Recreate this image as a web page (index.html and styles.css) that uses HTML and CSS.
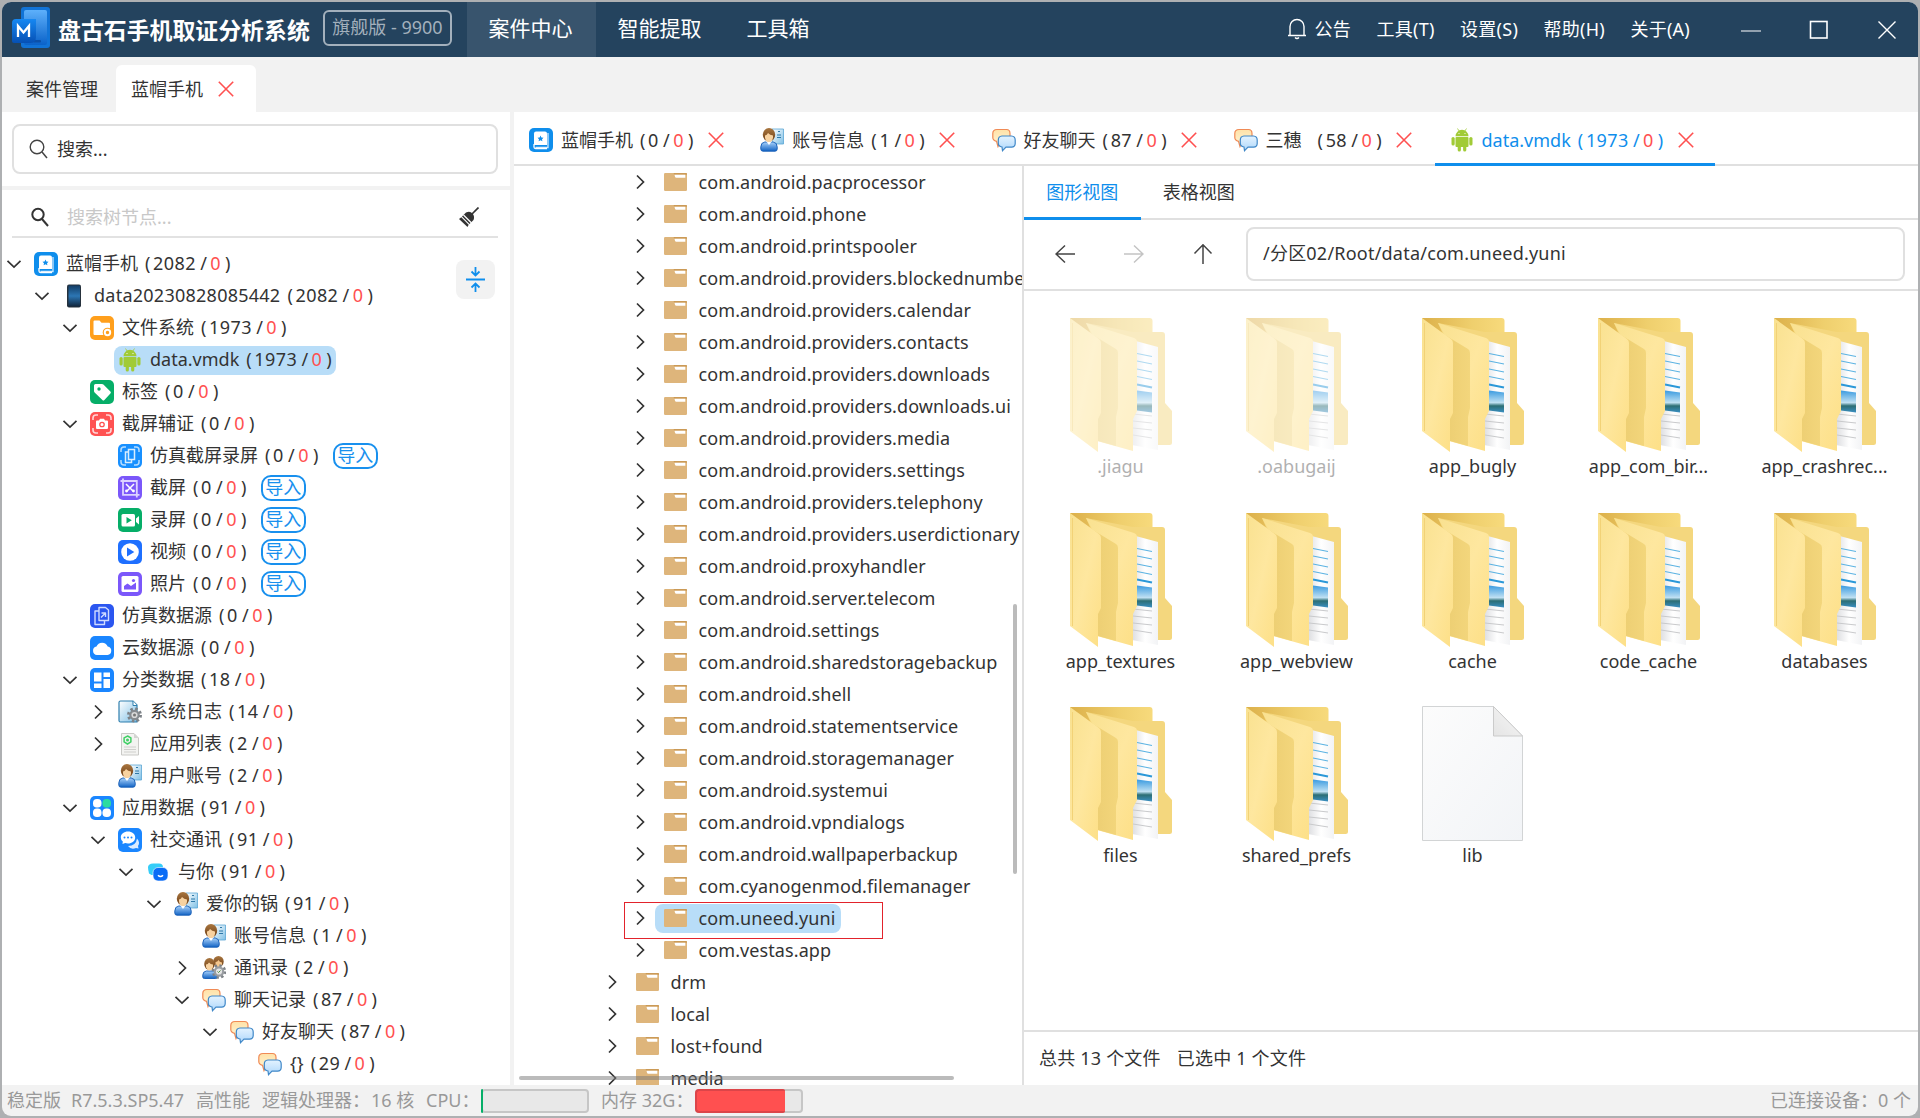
FILE: index.html
```html
<!DOCTYPE html>
<html lang="zh-CN">
<head>
<meta charset="utf-8">
<title>盘古石手机取证分析系统</title>
<link rel="stylesheet" href="styles.css">
</head>
<body>
<svg class="sprite" width="0" height="0" aria-hidden="true">
  <defs>
    <linearGradient id="gLogo" x1="0" y1="0" x2="0" y2="1"><stop offset="0" stop-color="#5db0fb"/><stop offset="1" stop-color="#0a62c9"/></linearGradient>
    <linearGradient id="gLogo2" x1="0" y1="0" x2="0" y2="1"><stop offset="0" stop-color="#1688f2"/><stop offset="1" stop-color="#0650b4"/></linearGradient>
    <linearGradient id="gPhone" x1="0" y1="0" x2="0" y2="1"><stop offset="0" stop-color="#123d66"/><stop offset=".5" stop-color="#2c76b4"/><stop offset="1" stop-color="#10263d"/></linearGradient>
    <linearGradient id="gFront" x1="0" y1="0" x2="1" y2="1"><stop offset="0" stop-color="#f9e190"/><stop offset=".5" stop-color="#fee79f"/><stop offset="1" stop-color="#fddf86"/></linearGradient>
    <linearGradient id="gBack" x1="0" y1="0" x2="1" y2="0"><stop offset="0" stop-color="#dcb04a"/><stop offset=".6" stop-color="#efcf6d"/><stop offset="1" stop-color="#f7da7c"/></linearGradient>
    <linearGradient id="gInner" x1="0" y1="0" x2="1" y2="0"><stop offset="0" stop-color="#ebcc70"/><stop offset="1" stop-color="#f3d67c"/></linearGradient>
    <linearGradient id="gPaper" x1="0" y1="0" x2="1" y2="0"><stop offset="0" stop-color="#dcdde0"/><stop offset=".5" stop-color="#fff"/><stop offset="1" stop-color="#f2f3f5"/></linearGradient>
    <linearGradient id="gSky" x1="0" y1="0" x2="0" y2="1"><stop offset="0" stop-color="#3b9be0"/><stop offset=".55" stop-color="#bfe0f2"/><stop offset=".7" stop-color="#2c6e74"/><stop offset="1" stop-color="#3a8fc2"/></linearGradient>
    <linearGradient id="gFile" x1="0" y1="0" x2="1" y2="1"><stop offset="0" stop-color="#fcfcfc"/><stop offset="1" stop-color="#f2f4f7"/></linearGradient>
    <linearGradient id="gFold" x1="0" y1="1" x2="1" y2="0"><stop offset="0" stop-color="#e4e4e4"/><stop offset="1" stop-color="#f8f8f8"/></linearGradient>
    <linearGradient id="gShirt" x1="0" y1="0" x2="0" y2="1"><stop offset="0" stop-color="#a9d2fb"/><stop offset="1" stop-color="#1263c4"/></linearGradient>
    <linearGradient id="gHair" x1="0" y1="0" x2="0" y2="1"><stop offset="0" stop-color="#a9763f"/><stop offset="1" stop-color="#6f3f16"/></linearGradient>
    <linearGradient id="gOrange" x1="0" y1="0" x2="0" y2="1"><stop offset="0" stop-color="#ffe2a8"/><stop offset="1" stop-color="#fff6d8"/></linearGradient>
    <linearGradient id="gBlue" x1="0" y1="0" x2="0" y2="1"><stop offset="0" stop-color="#e4f3ff"/><stop offset="1" stop-color="#aed7fb"/></linearGradient>
    <linearGradient id="gDoc" x1="0" y1="0" x2="1" y2="1"><stop offset="0" stop-color="#fff"/><stop offset="1" stop-color="#7fc0e6"/></linearGradient>
  </defs>
  <symbol id="open" viewBox="0 0 16 16"><path d="M1.5 4.8 8 11l6.500-6.200" fill="none" stroke="#333" stroke-width="1.7"/></symbol>
  <symbol id="shut" viewBox="0 0 16 16"><path d="M5 1.500 11.500 8 5 14.500" fill="none" stroke="#333" stroke-width="1.7"/></symbol>
  <symbol id="x" viewBox="0 0 16 16"><path d="M.8.800l14.400 14.400M15.200.800.8 15.200" fill="none" stroke="#ff5050" stroke-width="1.6"/></symbol>
  <symbol id="case" viewBox="0 0 24 24"><rect width="24" height="24" rx="5" fill="#0f8eec"/><path d="M7 3.500h9a2 2 0 0 1 2 2V17H5V5.500a2 2 0 0 1 2-2z" fill="#fff"/><path d="M19 5v14.500H6.500" fill="none" stroke="#cfe8fc" stroke-width="1.300"/><path d="M5 16v3q0 1.500 1.500 1.500H18" fill="none" stroke="#fff" stroke-width="1.300"/><path d="m11.500 7.500.9 1.900 2.100.3-1.500 1.500.4 2.100-1.900-1-1.900 1 .4-2.100-1.500-1.500 2.100-.3z" fill="#0f8eec"/></symbol>
  <symbol id="phone" viewBox="0 0 24 24"><rect x="5" y=".5" width="14" height="23" rx="2" fill="#26323d"/><rect x="6.500" y="1.500" width="11.500" height="21" fill="url(#gPhone)"/></symbol>
  <symbol id="fs" viewBox="0 0 24 24"><rect width="24" height="24" rx="5" fill="#ff9f1c"/><path d="M3.500 5.500q0-1 1-1h5l2 2.300h7.500q1 0 1 1V19H4.500q-1 0-1-1z" fill="#fff"/><circle cx="17.500" cy="16.500" r="4.800" fill="#ff9f1c"/><circle cx="17.500" cy="16.500" r="2.700" fill="none" stroke="#fff" stroke-width="2"/></symbol>
  <symbol id="android" viewBox="0 0 24 24"><g fill="#a1cb37"><path d="M5.500 8.300a6.500 6.500 0 0 1 13 0z"/><rect x="5.500" y="9" width="13" height="10" rx="1"/><rect x="1.500" y="9" width="3.200" height="8.500" rx="1.600"/><rect x="19.300" y="9" width="3.200" height="8.500" rx="1.600"/><rect x="7.700" y="17" width="3.200" height="6.500" rx="1.600"/><rect x="13.100" y="17" width="3.200" height="6.500" rx="1.600"/></g><path d="m7.500.5 1.700 2.700M16.500.5l-1.700 2.700" stroke="#a1cb37" stroke-width=".8"/><circle cx="9" cy="5.500" r=".6" fill="#fff"/><circle cx="15" cy="5.500" r=".6" fill="#fff"/></symbol>
  <symbol id="tag" viewBox="0 0 24 24"><rect width="24" height="24" rx="5" fill="#06ae68"/><path d="M4 5.500Q4 4 5.500 4H12q.8 0 1.400.6l7 7q1 1 0 2l-6 6.300q-1 1-2 0l-7.800-7.500Q4 11.800 4 11z" fill="#fff"/><circle cx="9" cy="9" r="1.700" fill="#06ae68"/></symbol>
  <symbol id="shot" viewBox="0 0 24 24"><rect width="24" height="24" rx="5" fill="#ff5252"/><path d="M3 8V6q0-3 3-3h2M16 3h2q3 0 3 3v2M21 16v2q0 3-3 3h-2M8 21H6q-3 0-3-3v-2" fill="none" stroke="#ffd5d5" stroke-width="1.600"/><path d="M6 9.500q0-1 1-1h2l1-1.700h4l1 1.700h2q1 0 1 1V16q0 1-1 1H7q-1 0-1-1z" fill="#fff"/><circle cx="12" cy="12.500" r="2.200" fill="none" stroke="#ff5252" stroke-width="1.300"/></symbol>
  <symbol id="sim" viewBox="0 0 24 24"><rect width="24" height="24" rx="5" fill="#1890ff"/><path d="M3 8V6q0-3 3-3h2M16 3h2q3 0 3 3v2M21 16v2q0 3-3 3h-2M8 21H6q-3 0-3-3v-2" fill="none" stroke="#b5dcff" stroke-width="1.500"/><path d="M10.500 5.500h6v10h-6zM10 8H7.500v10.500h6V16" fill="none" stroke="#d8edff" stroke-width="1.500"/></symbol>
  <symbol id="crop" viewBox="0 0 24 24"><rect width="24" height="24" rx="5" fill="#7b57fa"/><path d="M5 2.500v16.300h16.500M2.500 5h16.300v16.500" fill="none" stroke="#ddd3ff" stroke-width="1.800"/><path d="m8 8 7.500 7.500M16 8l-7.500 7.500" stroke="#fff" stroke-width="1.500"/><circle cx="8.500" cy="15" r="1.400" fill="#fff"/><circle cx="15.500" cy="15" r="1.400" fill="#fff"/></symbol>
  <symbol id="rec" viewBox="0 0 24 24"><rect width="24" height="24" rx="5" fill="#06ae68"/><rect x="3.500" y="6" width="13.500" height="12.500" rx="1.500" fill="#fff"/><path d="M18 10.500 21 8v8.500L18 14z" fill="#fff"/><path d="M8.500 9v6.500l5.300-3.300z" fill="#06ae68"/></symbol>
  <symbol id="vid" viewBox="0 0 24 24"><rect width="24" height="24" rx="5" fill="#1e6fff"/><circle cx="12" cy="12" r="8.800" fill="#fff"/><path d="M9 7.500v9l7.300-4.500z" fill="#1e6fff"/></symbol>
  <symbol id="pic" viewBox="0 0 24 24"><rect width="24" height="24" rx="5" fill="#7b57fa"/><rect x="3.500" y="4" width="17" height="16" rx="1.500" fill="#fff"/><path d="M6 17.500V14l3.500-2.500 3.500 2.500 5-3.500v7z" fill="#7b57fa"/><circle cx="15.500" cy="8.500" r="1.600" fill="#7b57fa"/></symbol>
  <symbol id="simd" viewBox="0 0 24 24"><rect width="24" height="24" rx="5" fill="#2b56f0"/><path d="M9 3.500h6.500l3 2.500v10.500H9zM9 7H5v13.500h9.500v-4M11 13.500l4.500-4.500m-4 0h4v4" fill="none" stroke="#cfdbff" stroke-width="1.400" stroke-linejoin="round"/></symbol>
  <symbol id="cloud" viewBox="0 0 24 24"><rect width="24" height="24" rx="5" fill="#1a86ff"/><path d="M7 19a4.300 4.300 0 0 1-.5-8.500 6 6 0 0 1 11.200 0A4.300 4.300 0 0 1 17.500 19z" fill="#fff"/></symbol>
  <symbol id="cat" viewBox="0 0 24 24"><rect width="24" height="24" rx="5" fill="#1a86ff"/><path d="M4 4.500h7.500v9H4zM4 15.500h7.500V20H4zM13.500 4.500H20V9h-6.500zM13.500 11H20v9h-6.500z" fill="#fff"/></symbol>
  <symbol id="log" viewBox="0 0 24 24"><path d="M1 2.500Q1 1 2.500 1H15l4 4v17H2.500Q1 22 1 20.500z" fill="url(#gDoc)" stroke="#2f7fae" stroke-width="1.200"/><path d="M15 1v4.500h4" fill="#fff" stroke="#2f7fae"/><circle cx="16.500" cy="15" r="6" fill="none" stroke="#7d8287" stroke-width="3" stroke-dasharray="2.400 2.300"/><circle cx="16.500" cy="15" r="4.200" fill="#d9d9d9" stroke="#868b90" stroke-width="2.200"/><circle cx="16.500" cy="15" r="1.500" fill="#777"/></symbol>
  <symbol id="apps" viewBox="0 0 24 24"><path d="M3.500 1.500H16l4.500 4.500v17H3.500z" fill="#f3f3f1" stroke="#c9c9c6"/><path d="M16 1.500V6h4.500z" fill="#d4d4d2"/><path d="m9.500 4 3.400 1.900v4L9.500 12l-3.400-2.100v-4z" fill="none" stroke="#3fcf64" stroke-width="1.500"/><circle cx="9.500" cy="8" r="1.500" fill="#3fcf64"/><path d="M6 15h12M6 17.500h12M6 20h12" stroke="#cfcfcc"/></symbol>
  <symbol id="user" viewBox="0 0 24 24"><path d="M12 1h11.500v15H12z" fill="url(#gDoc)" stroke="#5ba6d4" stroke-width=".8"/><path d="M17 7h4M17 9.500h4M18 3.500h2" stroke="#2e78a8"/><path d="M.8 19q0-4.500 4-5h8.400q4 .5 4 5v2q0 2.200-2.200 2.200H3Q.8 23.200.8 21z" fill="url(#gShirt)" stroke="#135bb5" stroke-width=".9"/><path d="M6 13h6l-3 4z" fill="#fff"/><ellipse cx="9" cy="6.800" rx="6.200" ry="6.800" fill="url(#gHair)"/><path d="M5 7.500q2-.5 3-2.500 2 2 5 2.500v2Q12.500 14 9 14T5 9.500z" fill="#f8d2a0"/></symbol>
  <symbol id="users" viewBox="0 0 24 24"><ellipse cx="16.500" cy="5.500" rx="5.200" ry="5.500" fill="url(#gHair)"/><path d="M13.500 6q2 0 3-2 1 2 3.500 2.500V9q-1 3-3.300 3T13.500 9z" fill="#f5c68c"/><path d="M.8 19q0-3.500 3.500-4h8q3 .5 3 4v2q0 1.500-1.700 1.500H2.500Q.8 22.500.8 21z" fill="url(#gShirt)" stroke="#135bb5" stroke-width=".9"/><ellipse cx="7.500" cy="8" rx="5.300" ry="6" fill="url(#gHair)"/><path d="M4 8.500q2 0 3-2 1.500 1.800 4 2V11q-1 3.500-3.500 3.500T4 11z" fill="#f8d2a0"/><circle cx="17" cy="15.500" r="5.800" fill="none" stroke="#7d8287" stroke-width="3" stroke-dasharray="2.300 2.200"/><circle cx="17" cy="15.500" r="4.200" fill="#e4e4e4" stroke="#999da1" stroke-width="2.200"/><path d="m15.500 15.500 1 1 2-2" fill="none" stroke="#4e8f3b"/></symbol>
  <symbol id="appdata" viewBox="0 0 24 24"><rect width="24" height="24" rx="5" fill="#1a86ff"/><rect x="3" y="3" width="8.500" height="8.500" rx="3.800" fill="#fff"/><rect x="12.500" y="3" width="8.500" height="8.500" rx="3.800" fill="#2ddca0"/><rect x="3" y="12.500" width="8.500" height="8.500" rx="3.800" fill="#fff"/><rect x="12.500" y="12.500" width="8.500" height="8.500" rx="3.800" fill="#fff"/></symbol>
  <symbol id="social" viewBox="0 0 24 24"><rect width="24" height="24" rx="5" fill="#1a86ff"/><path d="M19 10.500q3.500 4 1 7.500l.5 2.500-2.500-.5q-5 2-8-2 8 0 9-7.500z" fill="#dcecff"/><path d="M10 3.500c4 0 7.200 2.500 7.200 6s-3.200 6-7.200 6q-1.500 0-2.800-.4L4.500 16l.3-2.600Q2.800 12 2.800 9.500c0-3.500 3.200-6 7.200-6z" fill="#fff"/><circle cx="6.500" cy="9.500" r="1" fill="#1a86ff"/><circle cx="10" cy="9.500" r="1" fill="#1a86ff"/><circle cx="13.500" cy="9.500" r="1" fill="#1a86ff"/></symbol>
  <symbol id="yuni" viewBox="0 0 24 24"><path d="M7 3.500h6q4 0 4 4v4q0 3-3 3.500H5.500L3 13.500Q2 9.500 2 7q.5-3.500 5-3.500z" fill="#35cdf8"/><rect x="7" y="7.500" width="15" height="13.500" rx="5" fill="#0a6cf6" stroke="#fff" stroke-width=".6"/><path d="M12 15.200q2.500 2.600 5 0" fill="none" stroke="#fff" stroke-width="1.500"/></symbol>
  <symbol id="chat" viewBox="0 0 24 24"><path d="M5 1.500h9.500q3.500 0 3.500 4v4q0 4-3.500 4H8.500L6 18.500 4.500 13.300Q.8 12.500.8 9.500v-4q0-4 4.200-4z" fill="url(#gOrange)" stroke="#f08a55" stroke-width="1.200"/><path d="M10 8h9.500q3.700.3 3.700 4v3.500q0 3.500-3.700 3.700H14l-3.500 3.500-.5-3.700q-3.700-.5-3.700-3.700V12q0-3.700 3.700-4z" fill="url(#gBlue)" stroke="#4088c8" stroke-width="1.200"/></symbol>
  <symbol id="dir" viewBox="0 0 23 18"><rect width="23" height="18" rx="1.200" fill="#deb57b"/><path d="M9.500 0H22q1 0 1 1v.8H10.500z" fill="#cb9a56"/><path d="M10.500 1.700h10.800v3h-9q-1 0-1.300-1z" fill="#fff"/></symbol>
  <symbol id="folder" viewBox="0 0 102 134"><path d="M0 0h79.500q3 0 3 3v30H10z" fill="url(#gBack)"/><path d="M16 5l47 9h29q3 0 3 3v68l7 8v31.500q0 2.500-2.500 2.500H80L40 60z" fill="#f4d77e"/><path d="M62 22l26 7v103l-26-5z" fill="url(#gPaper)"/><path d="M67 35.500l15 3M67 43l15 3M67 51l15 3M67 58.500l15 3" stroke="#5cb3e2" stroke-width="1.200"/><path d="M67 66.500l15 3" stroke="#2b98d8" stroke-width="2"/><path d="M67 72.500l15 2v20l-15-2z" fill="url(#gSky)"/><path d="M63 96l19 2M63 103l19 2M63 110l19 2M63 117l19 3" stroke="#c9cacc" stroke-width="1"/><path d="M16 5l48 15q3 1 3 4v69l-4 8v32l-36-10V25z" fill="url(#gFront)"/><path d="M18 14l28 17q2 1 2 4v55l-2 9v29l-18-5V25z" fill="url(#gInner)"/><path d="M0 0l29 21q2 1.500 2 4v70l-3 6v33L0 113z" fill="url(#gFront)"/><path d="M2.500 5v108" stroke="#f2d277" stroke-width="1"/></symbol>
  <symbol id="file" viewBox="0 0 102 136"><path d="M.5.500h71l29 29.500v104.500H.5z" fill="url(#gFile)" stroke="#d2d4d5"/><path d="M71.500.500V30h29z" fill="url(#gFold)" stroke="#cbcbcb"/></symbol>
</svg>

<div class="window">
  <header class="titlebar">
    <svg class="logo" viewBox="0 0 38 42"><rect x="9" y="0" width="29" height="41" rx="3" fill="#1173d6"/><rect x="12" y="3" width="23" height="35" rx="2" fill="url(#gLogo)"/><rect x="21" y="33" width="8" height="2.500" rx="1" fill="#0b50a8"/><path d="M4 12h20v18q0 6-6 6H2q-2 0-2-2V16q0-4 4-4z" fill="url(#gLogo2)"/><path d="M6 30V19l5.500 6.500L17 19v11" fill="none" stroke="#fff" stroke-width="2.300"/></svg>
    <h1 class="brand">盘古石手机取证分析系统</h1>
    <span class="edition">旗舰版 - 9900</span>
    <nav class="mainnav"><a class="on">案件中心</a><a>智能提取</a><a>工具箱</a></nav>
    <nav class="sidenav">
      <a class="notice"><svg width="20" height="23" viewBox="0 0 20 23"><path d="M1 18.500h18M3 18V9.500a7 7 0 0 1 14 0V18M8 20.500q2 2 4 0" fill="none" stroke="#fff" stroke-width="1.400"/></svg>公告</a><a>工具(T)</a><a>设置(S)</a><a>帮助(H)</a><a>关于(A)</a>
    </nav>
    <div class="winctl">
      <svg viewBox="0 0 20 20"><path d="M0 11h20" stroke="#fff" stroke-width="1.200"/></svg>
      <svg viewBox="0 0 20 20"><rect x="1.500" y="1.500" width="16.500" height="16.500" fill="none" stroke="#fff" stroke-width="1.600"/></svg>
      <svg viewBox="0 0 20 20"><path d="m1.500 1.500 17 17m0-17-17 17" stroke="#fff" stroke-width="1.400"/></svg>
    </div>
  </header>

  <div class="casetabs"><span class="casetab">案件管理</span><span class="casetab on">蓝帽手机<svg class="x"><use href="#x"/></svg></span></div>

  <main class="body">
    <aside class="left">
      <div class="searchwrap"><div class="search"><svg width="19" height="20" viewBox="0 0 19 20"><circle cx="8" cy="8" r="6.800" fill="none" stroke="#444" stroke-width="1.400"/><path d="m13 13 5 6" stroke="#444" stroke-width="1.500"/></svg>搜索...</div></div>
      <div class="filter"><svg width="18" height="20" viewBox="0 0 18 20"><circle cx="7" cy="7.500" r="5.700" fill="none" stroke="#333" stroke-width="2"/><path d="m11 12 6 7" stroke="#333" stroke-width="2"/></svg><span>搜索树节点...</span><svg class="broom" width="20" height="20" viewBox="0 0 20 20"><path d="M19.500.500 12 8" stroke="#333" stroke-width="1.700"/><path d="M7 5.500q4-2 6.500 1t1 6.500L10.500 17 3 9.500z" fill="#333"/><path d="M2.300 10.200 9.700 17.800 8.500 20 0 12z" fill="#333"/><path d="m4.500 8 8 8" stroke="#fff" stroke-width="1.300"/></svg></div>
      <ul class="tree">
        <li class="row d0"><svg class="tw"><use href="#open"/></svg><span class="item"><svg><use href="#case"/></svg>蓝帽手机<span class="n">(<i>2082</i>/<em>0</em>)</span></span></li>
        <li class="row d1"><svg class="tw"><use href="#open"/></svg><span class="item"><svg><use href="#phone"/></svg><span class="serial">data20230828085442</span><span class="n">(<i>2082</i>/<em>0</em>)</span></span></li>
        <li class="row d2"><svg class="tw"><use href="#open"/></svg><span class="item"><svg><use href="#fs"/></svg>文件系统<span class="n">(<i>1973</i>/<em>0</em>)</span></span></li>
        <li class="row d3"><span class="tw"></span><span class="item sel"><svg><use href="#android"/></svg>data.vmdk<span class="n">(<i>1973</i>/<em>0</em>)</span></span></li>
        <li class="row d2"><span class="tw"></span><span class="item"><svg><use href="#tag"/></svg>标签<span class="n">(<i>0</i>/<em>0</em>)</span></span></li>
        <li class="row d2"><svg class="tw"><use href="#open"/></svg><span class="item"><svg><use href="#shot"/></svg>截屏辅证<span class="n">(<i>0</i>/<em>0</em>)</span></span></li>
        <li class="row d3"><span class="tw"></span><span class="item"><svg><use href="#sim"/></svg>仿真截屏录屏<span class="n">(<i>0</i>/<em>0</em>)</span></span><button class="imp">导入</button></li>
        <li class="row d3"><span class="tw"></span><span class="item"><svg><use href="#crop"/></svg>截屏<span class="n">(<i>0</i>/<em>0</em>)</span></span><button class="imp">导入</button></li>
        <li class="row d3"><span class="tw"></span><span class="item"><svg><use href="#rec"/></svg>录屏<span class="n">(<i>0</i>/<em>0</em>)</span></span><button class="imp">导入</button></li>
        <li class="row d3"><span class="tw"></span><span class="item"><svg><use href="#vid"/></svg>视频<span class="n">(<i>0</i>/<em>0</em>)</span></span><button class="imp">导入</button></li>
        <li class="row d3"><span class="tw"></span><span class="item"><svg><use href="#pic"/></svg>照片<span class="n">(<i>0</i>/<em>0</em>)</span></span><button class="imp">导入</button></li>
        <li class="row d2"><span class="tw"></span><span class="item"><svg><use href="#simd"/></svg>仿真数据源<span class="n">(<i>0</i>/<em>0</em>)</span></span></li>
        <li class="row d2"><span class="tw"></span><span class="item"><svg><use href="#cloud"/></svg>云数据源<span class="n">(<i>0</i>/<em>0</em>)</span></span></li>
        <li class="row d2"><svg class="tw"><use href="#open"/></svg><span class="item"><svg><use href="#cat"/></svg>分类数据<span class="n">(<i>18</i>/<em>0</em>)</span></span></li>
        <li class="row d3"><svg class="tw"><use href="#shut"/></svg><span class="item"><svg><use href="#log"/></svg>系统日志<span class="n">(<i>14</i>/<em>0</em>)</span></span></li>
        <li class="row d3"><svg class="tw"><use href="#shut"/></svg><span class="item"><svg><use href="#apps"/></svg>应用列表<span class="n">(<i>2</i>/<em>0</em>)</span></span></li>
        <li class="row d3"><span class="tw"></span><span class="item"><svg><use href="#user"/></svg>用户账号<span class="n">(<i>2</i>/<em>0</em>)</span></span></li>
        <li class="row d2"><svg class="tw"><use href="#open"/></svg><span class="item"><svg><use href="#appdata"/></svg>应用数据<span class="n">(<i>91</i>/<em>0</em>)</span></span></li>
        <li class="row d3"><svg class="tw"><use href="#open"/></svg><span class="item"><svg><use href="#social"/></svg>社交通讯<span class="n">(<i>91</i>/<em>0</em>)</span></span></li>
        <li class="row d4"><svg class="tw"><use href="#open"/></svg><span class="item"><svg><use href="#yuni"/></svg>与你<span class="n">(<i>91</i>/<em>0</em>)</span></span></li>
        <li class="row d5"><svg class="tw"><use href="#open"/></svg><span class="item"><svg><use href="#user"/></svg>爱你的锅<span class="n">(<i>91</i>/<em>0</em>)</span></span></li>
        <li class="row d6"><span class="tw"></span><span class="item"><svg><use href="#user"/></svg>账号信息<span class="n">(<i>1</i>/<em>0</em>)</span></span></li>
        <li class="row d6"><svg class="tw"><use href="#shut"/></svg><span class="item"><svg><use href="#users"/></svg>通讯录<span class="n">(<i>2</i>/<em>0</em>)</span></span></li>
        <li class="row d6"><svg class="tw"><use href="#open"/></svg><span class="item"><svg><use href="#chat"/></svg>聊天记录<span class="n">(<i>87</i>/<em>0</em>)</span></span></li>
        <li class="row d7"><svg class="tw"><use href="#open"/></svg><span class="item"><svg><use href="#chat"/></svg>好友聊天<span class="n">(<i>87</i>/<em>0</em>)</span></span></li>
        <li class="row d8"><span class="tw"></span><span class="item"><svg><use href="#chat"/></svg>{}<span class="n">(<i>29</i>/<em>0</em>)</span></span></li>
      </ul>
      <div class="collapse"><svg width="19" height="25" viewBox="0 0 19 25" fill="none" stroke="#0f8eec" stroke-width="1.800"><path d="M0 12.500h19M9.500 0v8M5.500 4.500l4 4 4-4M9.500 25v-8M5.500 20.500l4-4 4 4"/></svg></div>
    </aside>

    <section class="work">
      <div class="doctabs">
        <span class="doctab"><svg class="ic"><use href="#case"/></svg>蓝帽手机<span class="n">(<i>0</i>/<em>0</em>)</span><svg class="x"><use href="#x"/></svg></span>
        <span class="doctab"><svg class="ic"><use href="#user"/></svg>账号信息<span class="n">(<i>1</i>/<em>0</em>)</span><svg class="x"><use href="#x"/></svg></span>
        <span class="doctab"><svg class="ic"><use href="#chat"/></svg>好友聊天<span class="n">(<i>87</i>/<em>0</em>)</span><svg class="x"><use href="#x"/></svg></span>
        <span class="doctab"><svg class="ic"><use href="#chat"/></svg><span class="wide">三穗</span><span class="n">(<i>58</i>/<em>0</em>)</span><svg class="x"><use href="#x"/></svg></span>
        <span class="doctab on"><svg class="ic"><use href="#android"/></svg>data.vmdk<span class="n">(<i>1973</i>/<em>0</em>)</span><svg class="x"><use href="#x"/></svg></span>
      </div>
      <div class="panes">
        <div class="dirs">
          <ul class="dirlist">
            <li><svg class="tw"><use href="#shut"/></svg><span><svg><use href="#dir"/></svg>com.android.pacprocessor</span></li>
            <li><svg class="tw"><use href="#shut"/></svg><span><svg><use href="#dir"/></svg>com.android.phone</span></li>
            <li><svg class="tw"><use href="#shut"/></svg><span><svg><use href="#dir"/></svg>com.android.printspooler</span></li>
            <li><svg class="tw"><use href="#shut"/></svg><span><svg><use href="#dir"/></svg>com.android.providers.blockednumber</span></li>
            <li><svg class="tw"><use href="#shut"/></svg><span><svg><use href="#dir"/></svg>com.android.providers.calendar</span></li>
            <li><svg class="tw"><use href="#shut"/></svg><span><svg><use href="#dir"/></svg>com.android.providers.contacts</span></li>
            <li><svg class="tw"><use href="#shut"/></svg><span><svg><use href="#dir"/></svg>com.android.providers.downloads</span></li>
            <li><svg class="tw"><use href="#shut"/></svg><span><svg><use href="#dir"/></svg>com.android.providers.downloads.ui</span></li>
            <li><svg class="tw"><use href="#shut"/></svg><span><svg><use href="#dir"/></svg>com.android.providers.media</span></li>
            <li><svg class="tw"><use href="#shut"/></svg><span><svg><use href="#dir"/></svg>com.android.providers.settings</span></li>
            <li><svg class="tw"><use href="#shut"/></svg><span><svg><use href="#dir"/></svg>com.android.providers.telephony</span></li>
            <li><svg class="tw"><use href="#shut"/></svg><span><svg><use href="#dir"/></svg>com.android.providers.userdictionary</span></li>
            <li><svg class="tw"><use href="#shut"/></svg><span><svg><use href="#dir"/></svg>com.android.proxyhandler</span></li>
            <li><svg class="tw"><use href="#shut"/></svg><span><svg><use href="#dir"/></svg>com.android.server.telecom</span></li>
            <li><svg class="tw"><use href="#shut"/></svg><span><svg><use href="#dir"/></svg>com.android.settings</span></li>
            <li><svg class="tw"><use href="#shut"/></svg><span><svg><use href="#dir"/></svg>com.android.sharedstoragebackup</span></li>
            <li><svg class="tw"><use href="#shut"/></svg><span><svg><use href="#dir"/></svg>com.android.shell</span></li>
            <li><svg class="tw"><use href="#shut"/></svg><span><svg><use href="#dir"/></svg>com.android.statementservice</span></li>
            <li><svg class="tw"><use href="#shut"/></svg><span><svg><use href="#dir"/></svg>com.android.storagemanager</span></li>
            <li><svg class="tw"><use href="#shut"/></svg><span><svg><use href="#dir"/></svg>com.android.systemui</span></li>
            <li><svg class="tw"><use href="#shut"/></svg><span><svg><use href="#dir"/></svg>com.android.vpndialogs</span></li>
            <li><svg class="tw"><use href="#shut"/></svg><span><svg><use href="#dir"/></svg>com.android.wallpaperbackup</span></li>
            <li><svg class="tw"><use href="#shut"/></svg><span><svg><use href="#dir"/></svg>com.cyanogenmod.filemanager</span></li>
            <li class="marked"><svg class="tw"><use href="#shut"/></svg><span class="sel"><svg><use href="#dir"/></svg>com.uneed.yuni</span></li>
            <li><svg class="tw"><use href="#shut"/></svg><span><svg><use href="#dir"/></svg>com.vestas.app</span></li>
            <li class="up"><svg class="tw"><use href="#shut"/></svg><span><svg><use href="#dir"/></svg>drm</span></li>
            <li class="up"><svg class="tw"><use href="#shut"/></svg><span><svg><use href="#dir"/></svg>local</span></li>
            <li class="up"><svg class="tw"><use href="#shut"/></svg><span><svg><use href="#dir"/></svg>lost+found</span></li>
            <li class="up"><svg class="tw"><use href="#shut"/></svg><span><svg><use href="#dir"/></svg>media</span></li>
          </ul>
          <div class="vbar"></div><div class="hbar"></div>
        </div>
        <div class="browser">
          <div class="viewtabs"><span class="on">图形视图</span><span>表格视图</span></div>
          <div class="pathrow">
            <svg class="arr" viewBox="0 0 20 20"><path d="M20 10H1M10 1.500 1 10l9 8.500"/></svg>
            <svg class="arr off" viewBox="0 0 20 20"><path d="M0 10h19M10 1.500l9 8.500-9 8.500"/></svg>
            <svg class="arr" viewBox="0 0 20 20"><path d="M10 20V1M1.500 9.500 10 .8l8.500 8.700"/></svg>
            <div class="path">/分区02/Root/data/com.uneed.yuni</div>
          </div>
          <div class="files">
            <figure class="dim"><svg><use href="#folder"/></svg><figcaption>.jiagu</figcaption></figure>
            <figure class="dim"><svg><use href="#folder"/></svg><figcaption>.oabugaij</figcaption></figure>
            <figure><svg><use href="#folder"/></svg><figcaption>app_bugly</figcaption></figure>
            <figure><svg><use href="#folder"/></svg><figcaption>app_com_bir...</figcaption></figure>
            <figure><svg><use href="#folder"/></svg><figcaption>app_crashrec...</figcaption></figure>
            <figure><svg><use href="#folder"/></svg><figcaption>app_textures</figcaption></figure>
            <figure><svg><use href="#folder"/></svg><figcaption>app_webview</figcaption></figure>
            <figure><svg><use href="#folder"/></svg><figcaption>cache</figcaption></figure>
            <figure><svg><use href="#folder"/></svg><figcaption>code_cache</figcaption></figure>
            <figure><svg><use href="#folder"/></svg><figcaption>databases</figcaption></figure>
            <figure><svg><use href="#folder"/></svg><figcaption>files</figcaption></figure>
            <figure><svg><use href="#folder"/></svg><figcaption>shared_prefs</figcaption></figure>
            <figure><svg><use href="#file"/></svg><figcaption>lib</figcaption></figure>
          </div>
          <div class="summary"><span>总共 13 个文件</span><span>已选中 1 个文件</span></div>
        </div>
      </div>
    </section>
  </main>

  <footer class="status">
    <span class="s1">稳定版</span><span class="s2">R7.5.3.SP5.47</span><span class="s3">高性能</span><span class="s4">逻辑处理器：</span><span class="s5">16 核</span><span class="s6">CPU：</span>
    <div class="meter cpu"><div style="width:2%"></div></div>
    <span class="s7">内存 32G：</span>
    <div class="meter mem"><div style="width:87%"></div></div>
    <span class="devices">已连接设备：0 个</span>
  </footer>
</div>
</body>
</html>
```
FILE: styles.css
```css
* { box-sizing: border-box; }
html, body { margin: 0; height: 100%; overflow: hidden; }
body {
  padding: 2px;
  background: #aeb0b2;
  color: #333;
  font: 18px/32px "Noto Sans", "Noto Sans CJK SC", sans-serif;
}
ul { list-style: none; margin: 0; padding: 0; }
svg { display: block; flex: none; }
i, em { font-style: normal; }
.sprite { position: absolute; }

.window {
  display: flex; flex-direction: column;
  width: 1916px; height: 1114px;
  border-radius: 9px;
  overflow: hidden;
  background: #f2f2f2;
  white-space: nowrap;
}

/* title bar */
.titlebar { display: flex; align-items: center; height: 55px; flex: none; padding-left: 10px; background: #24435e; color: #fff; }
.logo { width: 38px; height: 42px; margin-top: -3px; }
.brand { margin: -2px 0 0 8px; width: 252px; font: 700 22.9px/32px "Noto Sans CJK SC", sans-serif; }
.edition { height: 36px; width: 129px; margin: -4px 15px 0 13px; border: 2px solid #a3b0bc; border-radius: 6px; color: #a3b0bc; line-height: 31px; text-align: center; }
.mainnav { display: flex; height: 55px; font-size: 21px; line-height: 52px; }
.mainnav a { padding: 0 23.5px 0 21.5px; }
.mainnav a.on { background: #38546d; }
.sidenav { display: flex; gap: 25.5px; margin-left: auto; margin-top: -2px; align-items: center; }
.sidenav a { letter-spacing: .25px; }
.notice { display: flex; gap: 8px; align-items: center; }
.winctl { display: flex; gap: 48px; margin: 0 21px 0 51px; }
.winctl svg { width: 20px; height: 20px; }

/* case tabs */
.casetabs { display: flex; align-items: flex-end; height: 55px; flex: none; }
.casetab { display: flex; align-items: center; height: 47px; padding: 0 18px 0 24px; }
.casetab.on { padding: 0 22px 0 15px; width: 140px; background: #fff; border-radius: 6px 6px 0 0; }
.x { width: 16px; height: 16px; margin-left: 15px; }

.body { display: flex; flex: 1; min-height: 0; gap: 4px; }

/* left panel */
.left { position: relative; width: 508px; background: #fff; overflow: hidden; }
.searchwrap { height: 78px; padding: 12px 12px 0 10px; border-bottom: 4px solid #f2f2f2; }
.search { display: flex; align-items: center; gap: 9px; height: 50px; padding-left: 15px; border: 2px solid #e0e0e0; border-radius: 8px; }
.filter { display: flex; align-items: center; height: 48px; margin: 0 12px 0 10px; padding: 8px 19px 0 19px; border-bottom: 2px solid #e2e2e2; }
.filter span { margin-left: 18px; color: #c8c8c8; }
.broom { margin-left: auto; }
.tree { padding-top: 10px; }
.row { display: flex; align-items: center; height: 32px; }
.tw { width: 16px; height: 16px; margin: 0 4px; flex: none; }
.item { display: flex; align-items: center; height: 29px; margin-left: 4px; padding: 0 4px; border-radius: 8px; line-height: 30px; padding-bottom: 2px; }
.item svg { width: 24px; height: 24px; margin: 1px 8px -1px 0; }
.sel { background: #b8ddf8; }
.d1 { padding-left: 28px; }
.d2 { padding-left: 56px; }
.d3 { padding-left: 84px; }
.d4 { padding-left: 112px; }
.d5 { padding-left: 140px; }
.d6 { padding-left: 168px; }
.d7 { padding-left: 196px; }
.d8 { padding-left: 224px; }
.serial { letter-spacing: .25px; }
.n { display: flex; gap: 3.9px; margin-left: 7px; }
.n i { letter-spacing: .4px; margin: 0 .4px 0 -1.200px; }
.n em { margin-left: -.5px; margin-right: .5px; color: #ff5050; }
.imp { width: 45px; height: 26px; margin: -1px 0 0 10.500px; padding: 0; border: 2px solid #1890ee; border-radius: 10px; background: #fff; color: #1890ee; font: inherit; line-height: 21px; }
.collapse { position: absolute; left: 454px; top: 148px; width: 39px; height: 39px; display: grid; place-items: center; border-radius: 8px; background: #f2f2f2; }

/* work area */
.work { display: flex; flex-direction: column; flex: 1; min-width: 0; background: #fff; }
.doctabs { display: flex; height: 54px; flex: none; border-bottom: 2px solid #e0e0e0; }
.doctab { display: flex; align-items: center; height: 54px; padding: 1px 21.500px 0 15px; }
.doctab .ic { width: 24px; height: 24px; margin-right: 8px; }
.doctab .wide { padding-right: 9px; }
.doctab .x { margin-left: 14.500px; }
.doctab.on { margin-left: 1px; color: #0f8eec; border-bottom: 3px solid #0f8eec; padding-top: 4px; }
.panes { display: flex; flex: 1; min-height: 0; }
.dirs { position: relative; width: 510px; border-right: 2px solid #e0e0e0; overflow: hidden; }
.dirlist li { display: flex; align-items: center; height: 32px; padding-left: 115px; letter-spacing: .09px; }
.dirlist li.up { padding-left: 87px; }
.dirlist .tw { margin: 0 7px 0 3px; }
.dirlist span { display: flex; align-items: center; height: 29px; padding: 0 6px 0 8.500px; border-radius: 8px; }
.dirlist span svg { width: 23px; height: 18px; margin-right: 12px; }
.marked { position: relative; }
.marked::after { content: ""; position: absolute; left: 110px; top: 0; width: 257px; height: 35px; border: 1px solid #e2232c; }
.vbar, .hbar { position: absolute; background: rgba(120, 120, 120, .5); border-radius: 2px; }
.vbar { left: 499px; top: 438px; width: 4px; height: 270px; }
.hbar { left: 5px; bottom: 5px; width: 435px; height: 4px; }

.browser { display: flex; flex-direction: column; flex: 1; min-width: 0; }
.viewtabs { display: flex; height: 54px; flex: none; border-bottom: 2px solid #e0e0e0; line-height: 53px; }
.viewtabs span { height: 54px; width: 116.500px; text-align: center; }
.viewtabs .on { color: #0f8eec; border-bottom: 3px solid #0f8eec; }
.pathrow { display: flex; align-items: center; height: 71px; flex: none; padding: 0 13px 1px 31px; border-bottom: 2px solid #e0e0e0; }
.arr { width: 20px; height: 20px; margin-right: 49px; fill: none; stroke: #444; stroke-width: 1.500; }
.arr.off { stroke: #c4c4c4; }
.arr + .arr + .arr { margin-right: 33px; }
.path { flex: 1; height: 54px; padding-left: 15px; border: 2px solid #e0e0e0; border-radius: 8px; line-height: 48px; letter-spacing: .22px; }
.files { display: grid; grid-template-columns: repeat(5, 176px); grid-auto-rows: 194.700px; align-content: start; flex: 1; padding: 26px 0 0 8.500px; }
figure { margin: 0; display: flex; flex-direction: column; align-items: center; }
figure svg { width: 102px; height: 136px; }
figcaption { line-height: 26px; }
.dim { opacity: .48; }
.dim figcaption { opacity: .8; }
.summary { display: flex; gap: 16px; height: 55px; flex: none; padding: 0 15px; border-top: 2px solid #e0e0e0; line-height: 52px; letter-spacing: .2px; }

/* status bar */
.status { display: flex; align-items: center; height: 31px; flex: none; padding: 0 7px 0 5px; color: #999; line-height: 29px; }
.s1 { width: 64px; }
.s2 { width: 125px; }
.s3 { width: 66px; }
.s4 { width: 109px; }
.s5 { width: 55px; }
.s6 { width: 55px; }
.s7 { width: 94px; }
.meter { width: 108px; height: 24px; margin: 0 12px 0 0; border: 2px solid #c6c6c6; border-radius: 4px; background: #e8e8e8; }
.meter div { height: 24px; margin: -2px; border-radius: 4px 2px 2px 4px; }
.cpu div { background: #06ae68; }
.mem { margin-right: 0; }
.mem div { background: #ff5050; border: 2px solid #dc4549; border-right: 0; }
.devices { margin-left: auto; }
```
